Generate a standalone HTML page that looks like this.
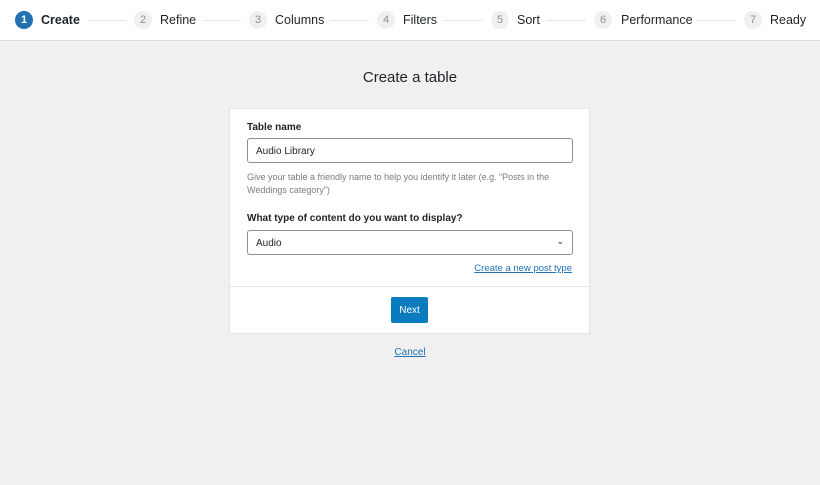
<!DOCTYPE html>
<html><head><style>
*{box-sizing:border-box;margin:0;padding:0}
body{width:820px;height:485px;background:#f0f0f1;font-family:"Liberation Sans",sans-serif;color:#1d2327;position:relative;overflow:hidden}
.hdr{position:absolute;left:0;top:0;width:820px;height:41px;background:#fff;border-bottom:1px solid #dcdcde}
.c{position:absolute;top:11px;width:18px;height:18px;border-radius:50%;background:#f0f0f1;color:#8c8f94;font-size:11px;line-height:18px;text-align:center}
.c.a{background:#2271b1;color:#fff;font-weight:bold}
.l{position:absolute;top:13px;font-size:12.5px;color:#1d2327}
.l.a{font-weight:bold}
.ln{position:absolute;top:20px;height:1px;background:#e4e4e7}
h1{position:absolute;left:0;width:820px;top:69px;text-align:center;font-size:15px;font-weight:normal;color:#1d2327}
.card{position:absolute;left:229px;top:108px;width:361px;height:226px;background:#fff;border:1px solid #e2e4e7}
.lab{position:absolute;left:17px;font-size:10px;font-weight:bold}
.inp{position:absolute;left:17px;width:326px;height:25px;border:1px solid #8c8f94;border-radius:3px;font-size:10px;padding:7px 8px}
.hint{position:absolute;left:17px;top:62px;font-size:9px;color:#787c82;line-height:13px;width:325px}
.lnk{position:absolute;right:17px;top:154px;font-size:9.5px;color:#2271b1;text-decoration:underline}
.div{position:absolute;left:0;top:177px;width:359px;height:1px;background:#e4e4e7}
.btn{position:absolute;left:161px;top:188px;width:37px;height:26px;background:#0a7bbf;color:#fff;font-size:10px;display:flex;align-items:center;justify-content:center;border-radius:2px}
.cancel{position:absolute;left:0;width:820px;top:347px;text-align:center;font-size:10px;color:#2271b1;text-decoration:underline}
</style></head><body>
<div class="hdr">
<div class="c a" style="left:15px">1</div><div class="l a" style="left:41px">Create</div>
<div class="ln" style="left:88px;width:38px"></div>
<div class="c" style="left:134px">2</div><div class="l" style="left:160px">Refine</div>
<div class="ln" style="left:204px;width:37px"></div>
<div class="c" style="left:249px">3</div><div class="l" style="left:275px">Columns</div>
<div class="ln" style="left:330px;width:39px"></div>
<div class="c" style="left:377px">4</div><div class="l" style="left:403px">Filters</div>
<div class="ln" style="left:444px;width:39px"></div>
<div class="c" style="left:491px">5</div><div class="l" style="left:517px">Sort</div>
<div class="ln" style="left:547px;width:39px"></div>
<div class="c" style="left:594px">6</div><div class="l" style="left:621px">Performance</div>
<div class="ln" style="left:696px;width:40px"></div>
<div class="c" style="left:744px">7</div><div class="l" style="left:770px">Ready</div>
</div>
<h1>Create a table</h1>
<div class="card">
<div class="lab" style="top:13px">Table name</div>
<div class="inp" style="top:29px">Audio Library</div>
<div class="hint">Give your table a friendly name to help you identify it later (e.g. “Posts in the Weddings category”)</div>
<div class="lab" style="top:104px">What type of content do you want to display?</div>
<div class="inp" style="top:121px">Audio<span style="position:absolute;right:8px;top:5px;font-size:9px">&#8964;</span></div>
<div class="lnk">Create a new post type</div>
<div class="div"></div>
<div class="btn">Next</div>
</div>
<div class="cancel">Cancel</div>
</body></html>
